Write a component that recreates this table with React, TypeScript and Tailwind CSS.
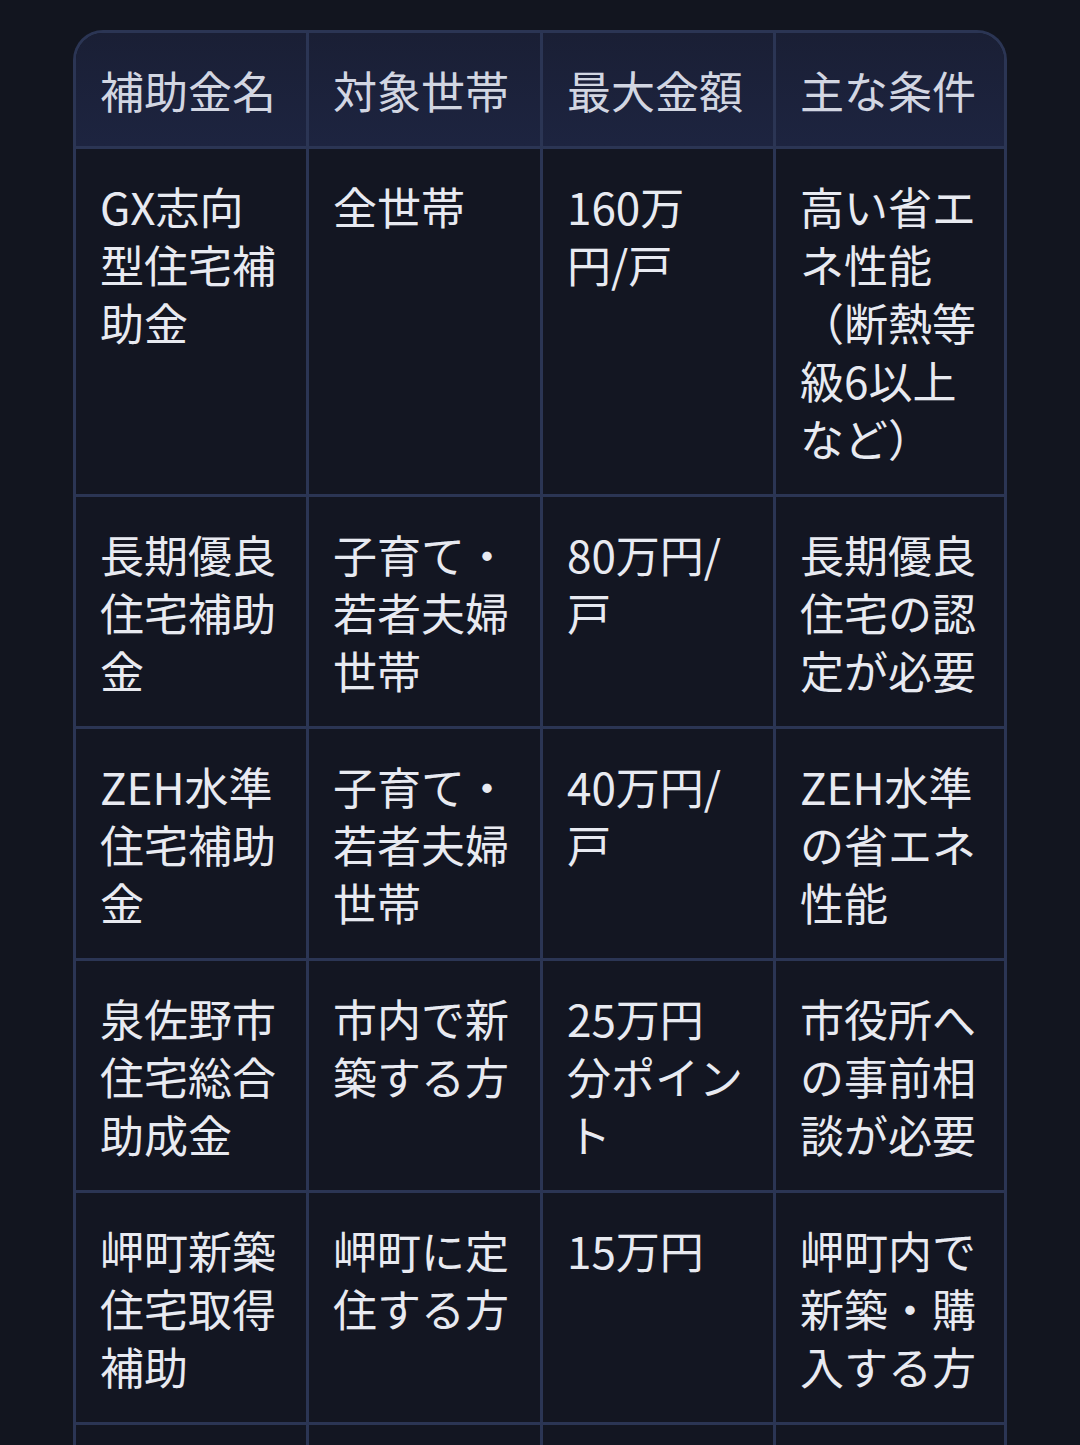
const headers = ["補助金名", "対象世帯", "最大金額", "主な条件"];

const rows: string[][] = [
  ["GX志向型住宅補助金", "全世帯", "160万円/戸", "高い省エネ性能（断熱等級6以上など）"],
  ["長期優良住宅補助金", "子育て・若者夫婦世帯", "80万円/戸", "長期優良住宅の認定が必要"],
  ["ZEH水準住宅補助金", "子育て・若者夫婦世帯", "40万円/戸", "ZEH水準の省エネ性能"],
  ["泉佐野市住宅総合助成金", "市内で新築する方", "25万円分ポイント", "市役所への事前相談が必要"],
  ["岬町新築住宅取得補助", "岬町に定住する方", "15万円", "岬町内で新築・購入する方"],
  ["田尻町住宅取得補助", "町内に転入する方", "10万円", "転入後3年以上の定住"],
];

const App = () => {
  return (
    <div
      className="h-[1445px] overflow-hidden bg-[#12151f] px-[73px] pt-[30px]"
      style={{ fontFamily: '"Noto Sans CJK JP", "Noto Sans", sans-serif' }}
    >
      <div className="overflow-hidden rounded-t-[30px] border-[3px] border-b-0 border-[#2b3554]">
        {/* header */}
        <div className="grid grid-cols-[233px_234px_233px_1fr] border-b-[3px] border-[#2b3554] bg-gradient-to-b from-[#1a1f35] to-[#1d2440]">
          {headers.map((h, i) => (
            <div
              key={h}
              className={`pl-[24px] pt-[28px] pb-[27px] text-[44px] leading-[58px] font-normal text-[#d2d6e2] ${
                i < 3 ? "border-r-[3px] border-[#2b3554] pr-[29px]" : "pr-[24px]"
              }`}
            >
              {h}
            </div>
          ))}
        </div>

        {/* body */}
        {rows.map((row, r) => (
          <div
            key={r}
            className="grid grid-cols-[233px_234px_233px_1fr] border-b-[3px] border-[#2b3554] bg-[#131622]"
          >
            {row.map((cell, i) => (
              <div
                key={i}
                className={`pl-[24px] pt-[28px] pb-[27px] text-[44px] leading-[58px] font-normal text-[#e8eaf1] break-all ${
                  i < 3 ? "border-r-[3px] border-[#2b3554] pr-[29px]" : "pr-[24px]"
                }`}
              >
                {cell}
              </div>
            ))}
          </div>
        ))}
      </div>
    </div>
  );
};

export default App;
